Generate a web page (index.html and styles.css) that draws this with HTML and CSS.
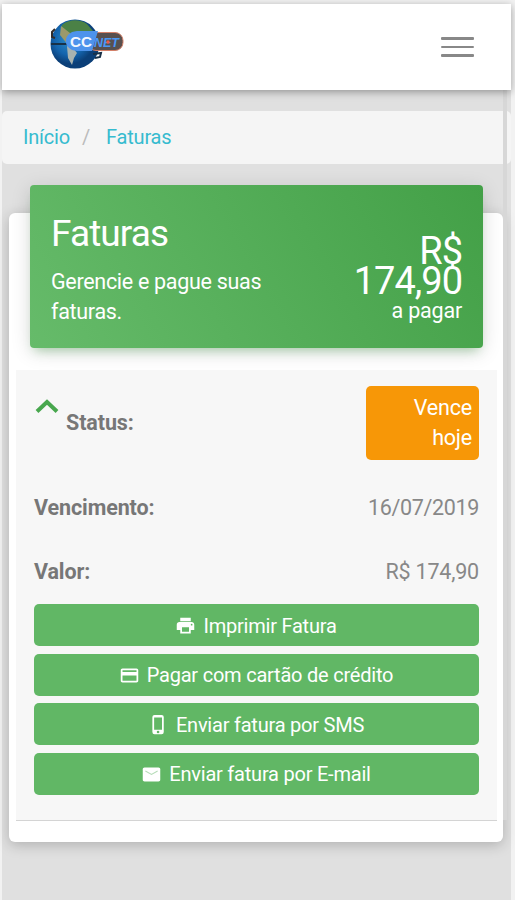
FILE: index.html
```html
<!DOCTYPE html>
<html lang="pt-br">
<head>
    <meta charset="UTF-8">
    <meta name="viewport" content="width=device-width, initial-scale=1.0">
    <title>Faturas</title>
    <link rel="stylesheet" href="styles.css">
</head>
<body>
    <div class="page">
        <nav class="navbar">
            <svg class="logo" width="84" height="56" viewBox="0 0 84 56">
                <defs>
                    <radialGradient id="globe" cx="40%" cy="40%">
                        <stop offset="0" stop-color="#2f8fc9"/>
                        <stop offset=".65" stop-color="#1464ad"/>
                        <stop offset="1" stop-color="#0b3f78"/>
                    </radialGradient>
                </defs>
                <circle cx="32" cy="30" r="24.500" fill="url(#globe)"/>
                <path d="M19 11c7-6 18-6 25-1l6 7-8 3-6 1-5 5-7-3-6-5z" fill="#4b8146"/>
                <path d="M18 12l9 7 2 7-4 5-8-10z" fill="#9b996b"/>
                <path d="M24 32l6 2 4 5-3 5-2 7-4-7z" fill="#a9b3b0"/>
                <path d="M12 15l-3 3v5l3 1" fill="none" stroke="#332d2b" stroke-width="2"/>
                <path d="M8 30h20M50 40l8-1-1 4-5 1" fill="none" stroke="#183148" stroke-width="2"/>
                <rect x="45" y="18.500" width="35" height="18" rx="8" fill="#58504f" stroke="#d48068"/>
                <path d="M34 17h21l-6 20H34c-15-1-15-19 0-20z" fill="#4d93ec"/>
                <text x="27" y="33" class="logo-cc" textLength="22" lengthAdjust="spacingAndGlyphs">CC</text>
                <text x="51" y="33" class="logo-net" textLength="25" lengthAdjust="spacingAndGlyphs">NET</text>
                <circle cx="65" cy="28" r="1.700" fill="#ee5d48"/>
            </svg>
            <div class="menu-toggle">
                <span></span>
                <span></span>
                <span></span>
            </div>
        </nav>

        <div class="breadcrumb">
            <a>Início</a>
            <span class="separator">/</span>
            <a>Faturas</a>
        </div>

        <div class="card">
            <div class="card-header">
                <div class="header-info">
                    <h4>Faturas</h4>
                    <p>Gerencie e pague suas faturas.</p>
                </div>
                <div class="header-total">
                    <div class="total">R$ 174,90</div>
                    <p>a pagar</p>
                </div>
            </div>

            <div class="invoice">
                <div class="row row-status">
                    <svg class="arrow" width="25" height="18" viewBox="0 0 25 18">
                        <path d="M3 14.500L13 5l10 9.500" fill="none" stroke="#48a74e" stroke-width="4"/>
                    </svg>
                    <strong>Status:</strong>
                    <span class="badge">Vence hoje</span>
                </div>
                <div class="row">
                    <strong>Vencimento:</strong>
                    <span class="value date">16/07/2019</span>
                </div>
                <div class="row">
                    <strong>Valor:</strong>
                    <span class="value">R$ 174,90</span>
                </div>
                <div class="buttons">
                    <a class="btn">
                        <svg width="21" height="21" viewBox="0 0 24 24"><path d="M19 8H5c-1.660 0-3 1.340-3 3v6h4v4h12v-4h4v-6c0-1.660-1.340-3-3-3zm-3 11H8v-5h8v5zm3-7a1 1 0 1 1 0-2 1 1 0 0 1 0 2zM18 3H6v4h12z"/></svg>
                        <span>Imprimir Fatura</span>
                    </a>
                    <a class="btn">
                        <svg width="21" height="21" viewBox="0 0 24 24"><path d="M20 4H4c-1.110 0-2 .890-2 2v12c0 1.110.890 2 2 2h16c1.110 0 2-.890 2-2V6c0-1.110-.890-2-2-2zm0 14H4v-6h16zm0-10H4V6h16z"/></svg>
                        <span>Pagar com cartão de crédito</span>
                    </a>
                    <a class="btn">
                        <svg width="21" height="21" viewBox="0 0 24 24"><path d="M15.500 1h-8A2.500 2.500 0 0 0 5 3.500v17A2.500 2.500 0 0 0 7.500 23h8a2.500 2.500 0 0 0 2.500-2.500v-17A2.500 2.500 0 0 0 15.500 1zm-4 21a1.500 1.500 0 1 1 0-3 1.500 1.500 0 0 1 0 3zm4.500-4H7V4h9z"/></svg>
                        <span>Enviar fatura por SMS</span>
                    </a>
                    <a class="btn">
                        <svg width="21" height="21" viewBox="0 0 24 24"><path d="M20 4H4c-1.100 0-2 .900-2 2v12c0 1.100.900 2 2 2h16c1.100 0 2-.900 2-2V6c0-1.100-.900-2-2-2z"/><path d="M5 8l7 4 7-4" fill="none" stroke="#b5dcb7" stroke-width="1.200"/></svg>
                        <span>Enviar fatura por E-mail</span>
                    </a>
                </div>
            </div>
        </div>
        <div class="scroll-line"></div>
    </div>
</body>
</html>
```

FILE: styles.css
```css
* {
    box-sizing: border-box;
}
body {
    margin: 0;
    height: 900px;
    padding: 4px 4px 0 2px;
    background-color: #f2f2f2;
    font-family: Roboto, sans-serif;
    font-size: 21.5px;
    line-height: 30px;
    color: #777;
    overflow: hidden;
}
h4, p {
    margin: 0;
}
.page {
    position: relative;
    height: 896px;
    background-color: #e0e0e0;
}
.navbar {
    position: relative;
    z-index: 2;
    display: flex;
    justify-content: space-between;
    align-items: center;
    height: 86px;
    padding: 0 37px 0 41px;
    background-color: #fff;
    box-shadow: 0 2px 8px rgba(0, 0, 0, 0.35);
}
.logo {
    margin-top: -10px;
}
.logo-cc {
    font: bold 15px "Liberation Sans", sans-serif;
    fill: #f2f7ff;
}
.logo-net {
    font: italic bold 13px "Liberation Sans", sans-serif;
    fill: #4a98f7;
}
.menu-toggle {
    display: flex;
    flex-direction: column;
    gap: 6px;
    width: 33px;
}
.menu-toggle span {
    height: 2.500px;
    border-radius: 1px;
    background-color: #888;
}
.breadcrumb {
    display: flex;
    align-items: center;
    height: 53px;
    margin-top: 21px;
    padding: 0 21px 2px;
    border-radius: 5px;
    background-color: #f5f5f5;
    font-size: 20px;
    letter-spacing: -0.2px;
}
.breadcrumb a {
    color: #36bbcf;
}
.separator {
    margin: 0 16px 0 12px;
    color: #bbb;
}
.card {
    width: 494px;
    height: 629px;
    margin: 49px 0 0 7px;
    padding: 0 6px 0 7px;
    border-radius: 6px;
    background-color: #fff;
    box-shadow: 0 3px 14px rgba(0, 0, 0, 0.22);
}
.card-header {
    position: relative;
    top: -28px;
    display: flex;
    justify-content: space-between;
    width: 453px;
    height: 163px;
    margin-left: 14px;
    padding: 31px 21px 0;
    border-radius: 4px;
    background: linear-gradient(60deg, #66bb6a, #43a047);
    box-shadow: 0 4px 20px rgba(0, 0, 0, 0.14), 0 7px 10px -5px rgba(76, 175, 80, 0.4);
    color: #fff;
}
.header-info {
    width: 240px;
    letter-spacing: -0.3px;
}
.card-header h4 {
    margin-bottom: 15px;
    font-size: 37px;
    font-weight: 400;
    line-height: 36px;
    letter-spacing: -0.9px;
}
.header-total {
    width: 110px;
    padding-top: 20px;
    letter-spacing: -0.2px;
    text-align: right;
}
.total {
    font-size: 38px;
    font-weight: 400;
    line-height: 30px;
    letter-spacing: -1px;
}
.invoice {
    height: 451px;
    margin-top: -6px;
    padding: 16px 18px 0;
    border-bottom: 1px solid #d4d4d4;
    background-color: #f7f7f7;
}
.row {
    display: flex;
    justify-content: space-between;
    align-items: center;
    height: 64px;
}
.row strong {
    font-weight: 700;
    letter-spacing: -0.1px;
}
.row-status {
    align-items: flex-start;
    height: 90px;
}
.row-status strong {
    margin: 22px auto 0 7px;
}
.arrow {
    margin-top: 11px;
}
.badge {
    width: 113px;
    height: 74px;
    padding: 7px 7px 0 35px;
    border-radius: 5px;
    background-color: #f79707;
    color: #fff;
    letter-spacing: -0.2px;
    text-align: right;
}
.value {
    color: #888;
    letter-spacing: -0.2px;
}
.date {
    letter-spacing: -0.35px;
}
.buttons {
    display: flex;
    flex-direction: column;
    gap: 7.500px;
}
.btn {
    display: flex;
    justify-content: center;
    align-items: center;
    gap: 7px;
    height: 42px;
    padding: 1px 1px 0 0;
    border-radius: 5px;
    background-color: #61b765;
    color: #fff;
    font-size: 20px;
    letter-spacing: -0.22px;
}
.btn svg {
    fill: #fff;
}
/* thin shade beside the content column */
.scroll-line {
    position: absolute;
    top: 86px;
    right: 4px;
    width: 4px;
    height: 730px;
    background-color: #d7d7d7;
}
```
